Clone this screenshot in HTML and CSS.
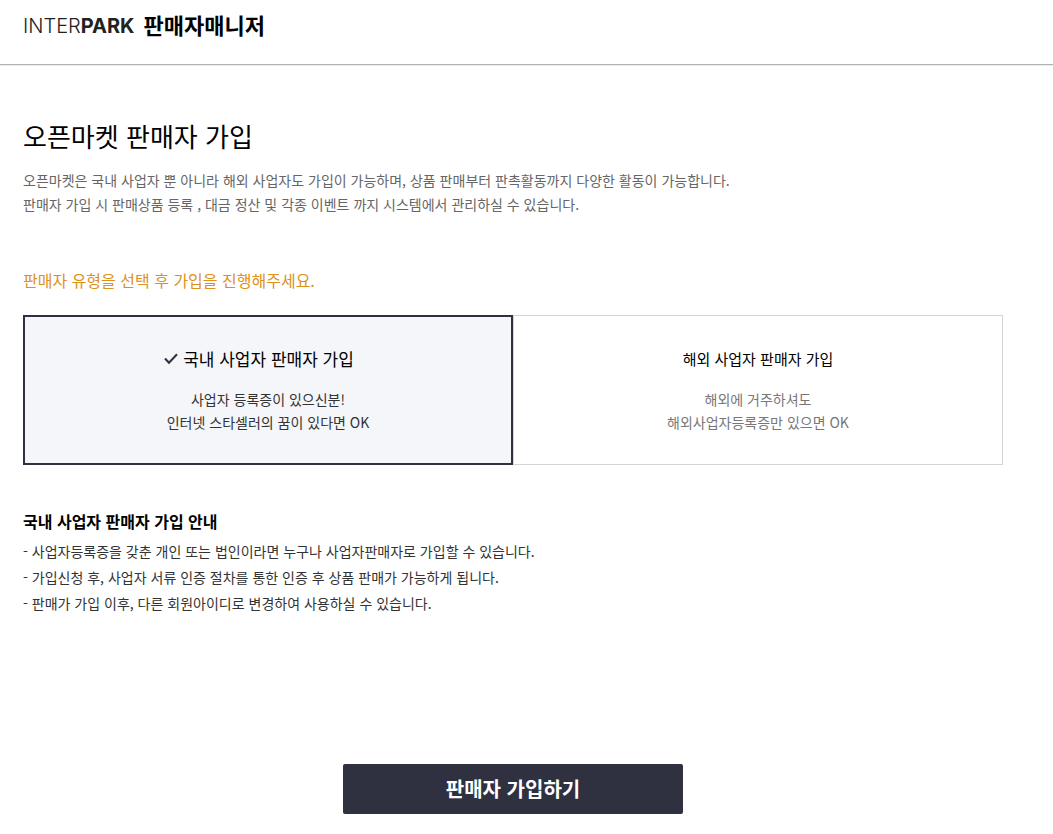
FILE: index.html
```html
<!DOCTYPE html>
<html lang="ko">
<head>
<meta charset="utf-8">
<meta name="viewport" content="width=device-width, initial-scale=1">
<title>판매자매니저</title>
<link rel="stylesheet" href="styles.css">
</head>
<body>
<header class="header">
  <a class="logo" href="#"><span class="logo-brand">INTER<b>PARK</b></span><span class="logo-name">판매자매니저</span></a>
</header>
<main class="content">
  <h1 class="title">오픈마켓 판매자 가입</h1>
  <p class="intro">오픈마켓은 국내 사업자 뿐 아니라 해외 사업자도 가입이 가능하며, 상품 판매부터 판촉활동까지 다양한 활동이 가능합니다.<br>판매자 가입 시 판매상품 등록 , 대금 정산 및 각종 이벤트 까지 시스템에서 관리하실 수 있습니다.</p>
  <form>
    <fieldset class="types">
      <legend class="prompt">판매자 유형을 선택 후 가입을 진행해주세요.</legend>
      <div class="cards">
        <label class="card">
          <input class="card-input" type="radio" name="seller" checked>
          <span class="card-title"><svg class="check" viewBox="0 0 14 12" aria-hidden="true"><path d="M1 5.5 5 9.8 13 1.3"/></svg>국내 사업자 판매자 가입</span>
          <span class="card-text">사업자 등록증이 있으신분!<br>인터넷 스타셀러의 꿈이 있다면 OK</span>
        </label>
        <label class="card">
          <input class="card-input" type="radio" name="seller">
          <span class="card-title"><svg class="check" viewBox="0 0 14 12" aria-hidden="true"><path d="M1 5.5 5 9.8 13 1.3"/></svg>해외 사업자 판매자 가입</span>
          <span class="card-text">해외에 거주하셔도<br>해외사업자등록증만 있으면 OK</span>
        </label>
      </div>
    </fieldset>
    <section class="guide">
      <h2 class="guide-title">국내 사업자 판매자 가입 안내</h2>
      <ul class="guide-list">
        <li>- 사업자등록증을 갖춘 개인 또는 법인이라면 누구나 사업자판매자로 가입할 수 있습니다.</li>
        <li>- 가입신청 후, 사업자 서류 인증 절차를 통한 인증 후 상품 판매가 가능하게 됩니다.</li>
        <li>- 판매가 가입 이후, 다른 회원아이디로 변경하여 사용하실 수 있습니다.</li>
      </ul>
    </section>
    <button class="submit" type="submit">판매자 가입하기</button>
  </form>
</main>
</body>
</html>
```
FILE: styles.css
```css
* { box-sizing: border-box; margin: 0; padding: 0; }
body {
  background: #fff;
  color: #000;
  font-family: "Noto Sans CJK KR", sans-serif;
  font-size: 14px;
  line-height: 24px;
}
.header { padding: 10px 23px 22px; border-bottom: 1px solid #b2b2b2; box-shadow: 0 1px 0 #ececec; }
.logo {
  display: flex;
  align-items: flex-start;
  gap: 9px;
  line-height: 32px;
  color: #000;
  text-decoration: none;
}
.logo-brand { color: #222; font-family: Inter, sans-serif; font-size: 20px; font-weight: 300; }
.logo-brand b { font-weight: 700; }
.logo-name { font-size: 22px; font-weight: 700; line-height: 28px; }
.content { max-width: 1026px; padding: 51px 23px 20px; }
.title { font-size: 26px; font-weight: 400; line-height: 40px; }
.intro { margin-top: 12px; color: #666; }
.types { margin-top: 52px; border: 0; }
.prompt { color: #dc911b; font-size: 16px; }
.cards { display: grid; grid-template-columns: 1fr 1fr; margin-top: 23px; }
.card {
  position: relative;
  display: flex;
  flex-direction: column;
  align-items: center;
  min-height: 150px;
  padding: 31px 16px 28px;
  border: 1px solid #d5d5d9;
  text-align: center;
  cursor: pointer;
}
.card-input { position: absolute; opacity: 0; }
.card-title { display: flex; align-items: center; gap: 5px; font-size: 15px; }
.card-text { margin-top: 17px; color: #777; line-height: 23px; }
.check { display: none; width: 14px; height: 12px; fill: none; stroke: #2f3040; stroke-width: 2; }
.card:has(:checked) { padding-top: 30px; border: 2px solid #2f3040; background: #f4f6fa; }
.card:has(:checked) .card-title { padding-right: 18px; font-size: 17px; }
.card:has(:checked) .card-text { color: #333; }
.card:has(:checked) .check { display: block; }
.card:has(:focus-visible) { outline: 2px solid #dc911b; }
.guide { margin-top: 44px; }
.guide-title { font-size: 16px; font-weight: 700; }
.guide-list { margin-top: 5px; color: #333; line-height: 26px; list-style: none; }
.submit {
  display: block;
  width: 340px;
  max-width: 100%;
  height: 50px;
  margin: 148px auto 0;
  border: 0;
  border-radius: 2px;
  background: #2f3040;
  color: #fff;
  font-family: inherit;
  font-size: 20px;
  font-weight: 700;
  line-height: 48px;
  cursor: pointer;
}
```
